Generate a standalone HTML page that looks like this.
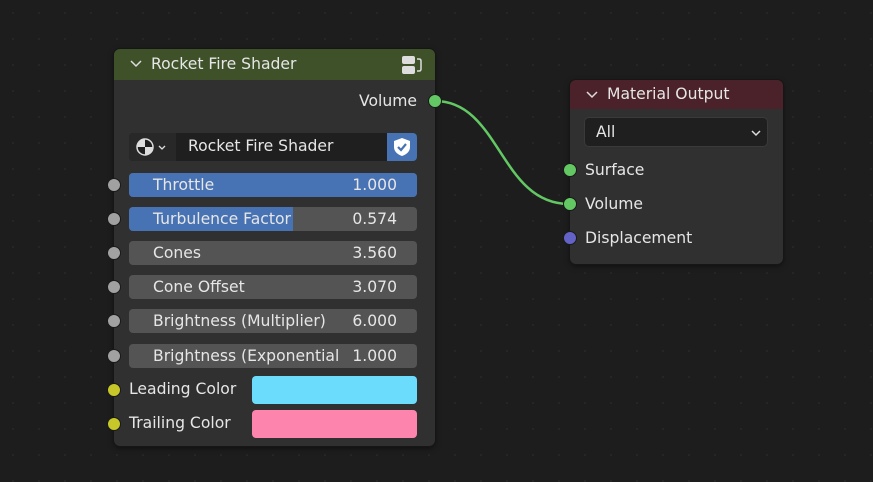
<!DOCTYPE html><html><head><style>
body{margin:0;width:873px;height:482px;overflow:hidden;background:#1d1d1d;background-image:radial-gradient(circle,#262626 1px,transparent 1.2px);background-size:26px 26px;font-family:"DejaVu Sans","Liberation Sans",sans-serif;font-size:15.6px;color:#e6e6e6;position:relative}
.a{position:absolute}
.node{background:#303030;border-radius:6px;box-shadow:0 0 0 1px #161616,0 2px 6px rgba(0,0,0,.5)}
.sl{position:absolute;left:129px;width:288px;height:24px;background:#545454;border-radius:4px;overflow:hidden}
.sl .f{position:absolute;left:0;top:0;bottom:0;background:#4772b3}
.sl .l{position:absolute;left:24px;top:3px;white-space:nowrap}
.sl .v{position:absolute;right:20px;top:3px;background:inherit}
.dot{position:absolute;width:12px;height:12px;border-radius:50%;border:1px solid #1a1a1a}
.chev{position:absolute}
</style></head><body>
<svg class="a" style="left:0;top:0" width="873" height="482"><path d="M435 101 C500 101,500 204,569 204" stroke="#63c763" stroke-width="2.5" fill="none"/></svg>
<div class="node a" style="left:114px;top:49px;width:321px;height:397px">
<div class="a" style="left:0;top:0;width:321px;height:31px;background:#3e5128;border-radius:6px 6px 0 0"></div>
<svg class="chev" style="left:15px;top:10px" width="14" height="10"><path d="M2 2 l5 5 l5 -5" stroke="#ddd" stroke-width="1.5" fill="none"/></svg>
<div class="a" style="left:37px;top:6px">Rocket Fire Shader</div>
<svg class="a" style="left:286px;top:5px" width="24" height="22"><rect x="2" y="2" width="13" height="8" rx="2" fill="#ddd"/><rect x="2" y="12" width="13" height="8" rx="2" fill="#ddd"/><path d="M17 5 h2 q2 0 2 2 v8 q0 2 -2 2 h-2" stroke="#ddd" stroke-width="1.5" fill="none"/></svg>
<div class="a" style="right:18px;top:43px">Volume</div>
</div>
<div class="dot" style="left:428px;top:94px;background:#63c763"></div>
<div class="a" style="left:129px;top:133px;width:288px;height:28px;background:#1f1f1f;border-radius:4px"></div>
<div class="a" style="left:129px;top:133px;width:47px;height:28px;background:#282828;border-radius:4px 0 0 4px"></div>
<svg class="a" style="left:135px;top:136px" width="40" height="22"><circle cx="10" cy="11" r="8" fill="#1f1f1f" stroke="#ddd" stroke-width="1.5"/><path d="M10 3 A8 8 0 0 0 2 11 H10 Z M10 11 H18 A8 8 0 0 1 10 19Z" fill="#ddd"/><path d="M24 10 l3 3 l3 -3" stroke="#ddd" stroke-width="1.3" fill="none"/></svg>
<div class="a" style="left:188px;top:137px">Rocket Fire Shader</div>
<div class="a" style="left:387px;top:133px;width:30px;height:28px;background:#4772b3;border-radius:0 4px 4px 0"></div>
<svg class="a" style="left:391px;top:136px" width="22" height="22"><path d="M11 2 L19 5 V11 Q19 17 11 20 Q3 17 3 11 V5Z" fill="#fff"/><path d="M7 11 l3 3 l5 -6" stroke="#4772b3" stroke-width="2.2" fill="none"/></svg>
<div class="sl" style="top:173px"><div class="f" style="width:288px"></div><span class="l">Throttle</span><span class="v" style="background:none">1.000</span></div>
<div class="sl" style="top:207px"><div class="f" style="width:164px"></div><span class="l">Turbulence Factor</span><span class="v" style="background:none">0.574</span></div>
<div class="sl" style="top:241px"><span class="l">Cones</span><span class="v">3.560</span></div>
<div class="sl" style="top:275px"><span class="l">Cone Offset</span><span class="v">3.070</span></div>
<div class="sl" style="top:309px"><span class="l">Brightness (Multiplier)</span><span class="v">6.000</span></div>
<div class="sl" style="top:344px"><span class="l">Brightness (Exponential</span><span class="v" style="padding-left:8px">1.000</span></div>
<div class="dot" style="left:107px;top:178px;background:#a1a1a1"></div>
<div class="dot" style="left:107px;top:212px;background:#a1a1a1"></div>
<div class="dot" style="left:107px;top:246px;background:#a1a1a1"></div>
<div class="dot" style="left:107px;top:280px;background:#a1a1a1"></div>
<div class="dot" style="left:107px;top:314px;background:#a1a1a1"></div>
<div class="dot" style="left:107px;top:349px;background:#a1a1a1"></div>
<div class="dot" style="left:107px;top:383px;background:#c7c729"></div>
<div class="dot" style="left:107px;top:417px;background:#c7c729"></div>
<div class="a" style="left:129px;top:380px">Leading Color</div>
<div class="a" style="left:129px;top:414px">Trailing Color</div>
<div class="a" style="left:252px;top:376px;width:165px;height:28px;background:#6cdcfc;border-radius:4px"></div>
<div class="a" style="left:252px;top:410px;width:165px;height:28px;background:#fd84ad;border-radius:4px"></div>

<div class="node a" style="left:570px;top:80px;width:213px;height:184px">
<div class="a" style="left:0;top:0;width:213px;height:29px;background:#4b2229;border-radius:6px 6px 0 0"></div>
<svg class="chev" style="left:15px;top:10px" width="14" height="10"><path d="M2 2 l5 5 l5 -5" stroke="#ddd" stroke-width="1.5" fill="none"/></svg>
<div class="a" style="left:37px;top:5px">Material Output</div>
<div class="a" style="left:15px;top:38px;width:182px;height:28px;background:#1f1f1f;border-radius:4px;box-shadow:0 0 0 1px #3a3a3a"></div>
<div class="a" style="left:26px;top:43px">All</div>
<svg class="a" style="left:180px;top:48px" width="12" height="10"><path d="M2 3 l4 4 l4 -4" stroke="#ddd" stroke-width="1.5" fill="none"/></svg>
<div class="a" style="left:15px;top:81px">Surface</div>
<div class="a" style="left:15px;top:115px">Volume</div>
<div class="a" style="left:15px;top:149px">Displacement</div>
</div>
<div class="dot" style="left:563px;top:163px;background:#63c763"></div>
<div class="dot" style="left:563px;top:197px;background:#63c763"></div>
<div class="dot" style="left:563px;top:231px;background:#6363c7"></div>
</body></html>
